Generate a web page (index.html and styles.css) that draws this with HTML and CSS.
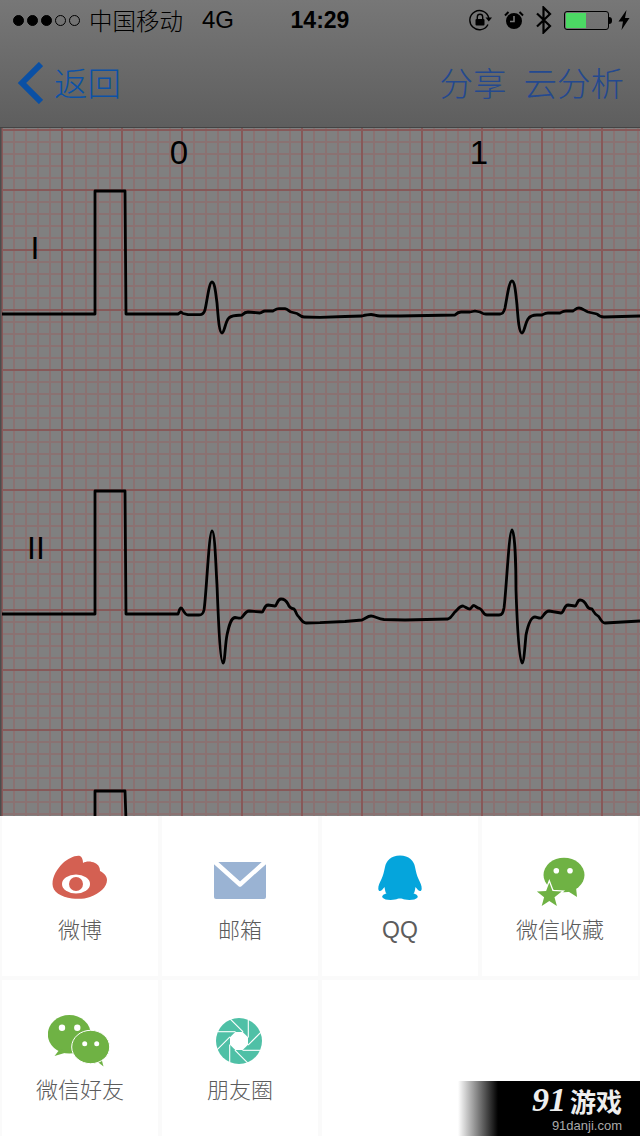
FILE: index.html
```html
<!DOCTYPE html>
<html lang="zh">
<head>
    <meta charset="UTF-8">
    <meta name="viewport" content="width=device-width, initial-scale=1.0">
    <title>心电图</title>
    <link rel="stylesheet" href="styles.css">
</head>
<body>
    <!-- Status bar and nav -->
    <header class="top">
        <div class="status">
            <div class="status-left">
                <span class="signal">
                    <i class="dot"></i><i class="dot"></i><i class="dot"></i><i class="dot off"></i><i class="dot off"></i>
                </span>
                <span class="carrier">中国移动</span>
                <span class="network">4G</span>
            </div>
            <div class="time">14:29</div>
            <div class="status-right">
                <svg class="st-lock" width="24" height="22" viewBox="0 0 24 22">
                    <path d="M19 15.5A9.6 9.6 0 1 1 19.8 9" fill="none" stroke="#000" stroke-width="1.4"/>
                    <path d="M16.500 8.500H23L19.800 12.500Z" fill="#000"/>
                    <rect x="6.500" y="10" width="9" height="6.500" rx="1" fill="#000"/>
                    <path d="M8.300 10V8a2.700 2.700 0 0 1 5.400 0v2" fill="none" stroke="#000" stroke-width="1.400"/>
                </svg>
                <svg class="st-alarm" width="20" height="20" viewBox="0 0 20 20">
                    <circle cx="10" cy="11" r="8" fill="#000"/>
                    <path d="M10 6v5.500H6" fill="none" stroke="#777" stroke-width="1.600"/>
                    <path d="M1 5.500L4.500 2M19 5.500L15.500 2" stroke="#000" stroke-width="2"/>
                </svg>
                <svg class="st-bt" width="18" height="28" viewBox="0 0 18 28">
                    <path d="M2 7.500L15 20L8.500 26.500V1.500L15 8L2 20.500" fill="none" stroke="#000" stroke-width="2.200"/>
                </svg>
                <div class="battery"><div class="battery-fill"></div></div>
                <i class="battery-nub"></i>
                <svg class="st-bolt" width="12" height="20" viewBox="0 0 12 20">
                    <path d="M8.500 0L0.500 11.500H5L3.500 20L11.500 8H7Z" fill="#000"/>
                </svg>
            </div>
        </div>
        <nav class="nav">
            <a class="back">
                <svg width="26" height="42" viewBox="0 0 26 42">
                    <polyline points="24,2 5,21 24,40" fill="none" stroke="#0a50a5" stroke-width="6"/>
                </svg>
                <span>返回</span>
            </a>
            <div class="actions">
                <span>分享</span>
                <span>云分析</span>
            </div>
        </nav>
    </header>

    <!-- ECG paper, drawn in page coordinates -->
    <svg class="chart" width="640" height="688" viewBox="0 128 640 688">
        <defs>
            <pattern id="minor" x="-4" y="124" width="12" height="12" patternUnits="userSpaceOnUse">
                <path d="M6 0V12M0 6H12" stroke="#8a7272" stroke-width="2" fill="none"/>
            </pattern>
            <pattern id="major" x="-28" y="100" width="60" height="60" patternUnits="userSpaceOnUse">
                <path d="M30 0V60M0 30H60" stroke="#875959" stroke-width="2" fill="none"/>
            </pattern>
        </defs>
        <rect x="0" y="128" width="640" height="688" fill="#808080"/>
        <rect x="0" y="128" width="640" height="688" fill="url(#minor)"/>
        <rect x="0" y="128" width="640" height="688" fill="url(#major)"/>
        <rect x="0" y="128" width="1.500" height="688" fill="#4c4c4c"/>

        <text class="tick" x="179" y="164" text-anchor="middle">0</text>
        <text class="tick" x="479" y="164" text-anchor="middle">1</text>
        <text class="lead" x="35" y="259" text-anchor="middle">I</text>
        <text class="lead" x="36" y="559" text-anchor="middle">II</text>

        <path class="trace" d="M2 314H95V191H125L126 314H178L181 312L183 313.500L188 314.700H200C203 314.700 204 313 205 310C207 302 209 282 212 282C215 282 216 296 217 303C218 314 219 333 222 333C224 333 225 324 228 319C230 316 233 315.700 236 315.500L242 315C244 313 246 312 248 312L260 313C262 312.500 263 311 265 311L273 311C275 310 276 308.700 279 308.700L285 308.700C288 309 289 311.500 291 312L297 313.500C299 315 301 317 304 317L320 317.300L345 316.500L362 316C366 315 368 314.500 371 314.500C374 314.500 376 316 380 316L400 316L455 315C457 313 458 312 461 312L470 312L475 311L480 312C482 313 483 314 486 314L500 314C503 314 504 312 505 308C507 298 509 281 512 281C515 281 516 296 517 305C518 318 519 333 522 333C524 333 525 324 528 319C530 316 533 315 537 315L542 315C544 314 545 313 548 313L560 313C562 312 563 311 566 311L573 311C575 310 576 308 579 308C582 308 585 311 588 312L597 314C599 316 601 317 604 317L640 316"/>
        <path class="trace" d="M2 614H95V491H125L126 614H178C179 612 179.500 608 181 608C183 608 184 615 188 615L199 615C202 615 203 614 204 610C206 600 209 531 212 531C215 531 216 570 217 585C218 610 220 663 223 663C225 663 225 645 227 635C229 625 231 618 235 617.500C237 617.500 239 618.500 241 618C243 617.500 245 611 249 611L262 612C264 612 264 605 268 605L275 606C277 606 277 599 281 599C284 599 286 600 288 604C289 607 291 608.500 294 609C296 611 296 614 298 616C300 617.500 302 623 306 623L320 622.700L345 621.500L362 620C366 618 368 616 371 616C375 616 378 619 384 619.500L405 620L448 619C452 618 453 613 456 611C458 609 460 606 463 606C466 607 467 609 470 609C472 608 472 605.500 474 605.500C476 606 476 608 480 608.700C483 610 483 615 487 615L499 615C502 615 503 613 504 608C506 595 509 530 512 530C515 530 516 570 516 590C517 620 519 663 522 663C524 663 525 645 526 635C528 625 531 617 535 617C537 617 539 618.500 541 618C543 617 545 611 549 611L561 613C564 613 564 605 568 605L575 606C577 606 577 600 580 600C583 600 585 602 587 606C588 608 590 609 592 609C594 612 595 615 598 616C600 617 601 623 605 623L640 621"/>
        <path class="trace" d="M95 820V791H125L126 820"/>
    </svg>

    <!-- Share sheet -->
    <section class="sheet">
        <div class="cell">
            <svg class="icon" viewBox="0 0 64 60">
                <path d="M32 7C34 8 35 11 35 14C38 12 43 12 47 14C51 16 52 19 52 22C56 24 59 27 59 31C59 38 52 44 42 48C37 50 30 50 24 49.500C13 48 4.500 43 4.500 35C4.500 27 9 20 15 14C20 10 27 6 32 7Z" fill="#d46052"/>
                <ellipse cx="28" cy="35" rx="14" ry="9.500" fill="#fff"/>
                <circle cx="28" cy="35" r="7" fill="#d46052"/>
            </svg>
            <span class="label">微博</span>
        </div>
        <div class="cell">
            <svg class="icon" viewBox="0 0 64 60">
                <rect x="6" y="13" width="52" height="37" rx="2" fill="#9ab3d3"/>
                <polyline points="3,9.500 32,35.500 61,9.500" fill="none" stroke="#fff" stroke-width="4.400" stroke-linejoin="round"/>
            </svg>
            <span class="label">邮箱</span>
        </div>
        <div class="cell">
            <svg class="icon" viewBox="0 0 64 60">
                <path d="M32 6.500C41 6.500 46 12 47 18C48 23 49 27 50.500 30C52 33 54 37 53.700 40C53.500 42 52 43 50 41L47.500 38C47 41 46.500 44 45.500 44.500C48.500 45 50.500 47 49.500 48.500C48 51 41 51.500 37 50.500C35 50 33.500 49.500 32 49.500C30.500 49.500 29 50 27 50.500C23 51.500 16 51 14.500 48.500C13.500 47 15.500 45 18.500 44.500C17.500 44 17 41 16.500 38L14 41C12 43 10.500 42 10.300 40C10 37 12 33 13.500 30C15 27 16 23 17 18C18 12 23 6.500 32 6.500Z" fill="#05a5dc"/>
            </svg>
            <span class="label latin">QQ</span>
        </div>
        <div class="cell">
            <svg class="icon" viewBox="0 0 64 60">
                <ellipse cx="36" cy="26" rx="20.500" ry="17.300" fill="#6fb244"/>
                <path d="M38 41L49 48L48 38Z" fill="#6fb244"/>
                <circle cx="28.300" cy="21.700" r="2.800" fill="#fff"/>
                <circle cx="42" cy="21.700" r="2.800" fill="#fff"/>
                <polygon points="21.300,33.500 24.500,42 33.700,42.500 26.500,48.200 28.900,57 21.300,52 13.700,57 16.100,48.200 8.900,42.500 18.100,42" fill="#6fb244" stroke="#fff" stroke-width="2.500" paint-order="stroke"/>
            </svg>
            <span class="label">微信收藏</span>
        </div>
        <div class="cell lower">
            <svg class="icon" viewBox="0 0 64 60">
                <ellipse cx="21.300" cy="25.300" rx="21.500" ry="19.300" fill="#6fb244"/>
                <path d="M12 40L6.500 47L20 43Z" fill="#6fb244"/>
                <circle cx="14" cy="18.700" r="3.200" fill="#fff"/>
                <circle cx="29.300" cy="18.700" r="3.200" fill="#fff"/>
                <path d="M46 50L55.500 57.500L53 48Z" fill="#6fb244"/>
                <ellipse cx="42.700" cy="38" rx="19" ry="16.700" fill="#6fb244" stroke="#fff" stroke-width="1"/>
                <circle cx="36.700" cy="34.700" r="2.500" fill="#fff"/>
                <circle cx="48.700" cy="34.700" r="2.500" fill="#fff"/>
            </svg>
            <span class="label">微信好友</span>
        </div>
        <div class="cell lower">
            <svg class="icon" viewBox="0 0 64 60">
                <circle cx="31" cy="32" r="23" fill="#4fc0a6"/>
                <g transform="translate(31 32)" stroke="#fff" stroke-width="1.100">
                    <polygon points="9,-3.700 9,3.700 3.700,9 -3.700,9 -9,3.700 -9,-3.700 -3.700,-9 3.700,-9" fill="#fff" stroke="none"/>
                    <line x1="9.300" y1="-24" x2="9.300" y2="-3.500"/>
                    <line x1="9.300" y1="-24" x2="9.300" y2="-3.500" transform="rotate(45)"/>
                    <line x1="9.300" y1="-24" x2="9.300" y2="-3.500" transform="rotate(90)"/>
                    <line x1="9.300" y1="-24" x2="9.300" y2="-3.500" transform="rotate(135)"/>
                    <line x1="9.300" y1="-24" x2="9.300" y2="-3.500" transform="rotate(180)"/>
                    <line x1="9.300" y1="-24" x2="9.300" y2="-3.500" transform="rotate(225)"/>
                    <line x1="9.300" y1="-24" x2="9.300" y2="-3.500" transform="rotate(270)"/>
                    <line x1="9.300" y1="-24" x2="9.300" y2="-3.500" transform="rotate(315)"/>
                </g>
            </svg>
            <span class="label">朋友圈</span>
        </div>
        <div class="cell lower wide"></div>

        <!-- Watermark over the corner -->
        <div class="watermark">
            <div class="wm-brand"><span class="wm-num">91</span><span class="wm-name">游戏</span></div>
            <div class="wm-url">91danji.com</div>
        </div>
    </section>
</body>
</html>
```
FILE: styles.css
```css
body {
    margin: 0;
    width: 640px;
    height: 1136px;
    overflow: hidden;
    background-color: #fff;
    font-family: 'Liberation Sans', 'Noto Sans CJK SC', sans-serif;
}

/* Top area */
.top {
    height: 128px;
    box-sizing: border-box;
    background: linear-gradient(#777777, #5e5e5e);
    border-bottom: 1px solid #444;
}
.status {
    height: 40px;
    display: grid;
    grid-template-columns: 1fr auto 1fr;
    align-items: center;
    color: #000;
}
.status-left {
    display: flex;
    align-items: center;
    padding-left: 13px;
}
.signal {
    display: flex;
    gap: 3px;
    margin-right: 9px;
}
.dot {
    width: 11px;
    height: 11px;
    box-sizing: border-box;
    border-radius: 50%;
    border: 1px solid #000;
    background-color: #000;
}
.dot.off {
    background-color: transparent;
}
.carrier {
    font-family: 'Noto Sans CJK SC', sans-serif;
    font-size: 23.5px;
    font-weight: 300;
    line-height: 40px;
    margin-right: 19px;
}
.network {
    font-size: 24px;
}
.time {
    font-size: 23px;
    font-weight: bold;
}
.status-right {
    display: flex;
    align-items: center;
    justify-content: flex-end;
    padding-right: 10px;
}
.st-lock {
    margin-right: 11px;
}
.st-alarm {
    margin-right: 11px;
}
.st-bt {
    margin-right: 11px;
}
.battery {
    width: 45px;
    height: 19px;
    box-sizing: border-box;
    border: 1px solid #000;
    border-radius: 3px;
    padding: 1px;
}
.battery-fill {
    width: 20px;
    height: 100%;
    background-color: #4cd964;
}
.battery-nub {
    width: 3px;
    height: 7px;
    background-color: #000;
    border-radius: 0 3px 3px 0;
    margin-right: 6px;
}
.nav {
    height: 87px;
    box-sizing: border-box;
    display: flex;
    justify-content: space-between;
    align-items: center;
    padding: 0 16px 4px 17px;
    font-family: 'Noto Sans CJK SC', sans-serif;
    font-size: 33.5px;
    font-weight: 300;
}
.back {
    display: flex;
    align-items: center;
    gap: 11px;
    color: #0c52a6;
}
.back svg {
    display: block;
    margin-top: 2px;
}
.actions {
    display: flex;
    gap: 17px;
    color: #24498f;
}

/* ECG paper */
.chart {
    display: block;
}
.trace {
    fill: none;
    stroke: #000;
    stroke-width: 2.800;
    stroke-linejoin: round;
    filter: blur(0.3px);
}
.tick {
    font-family: 'Liberation Sans', sans-serif;
    font-size: 33px;
    fill: #000;
}
.lead {
    font-family: 'Liberation Sans', sans-serif;
    font-size: 32px;
    fill: #000;
}

/* Share sheet */
.sheet {
    position: relative;
    height: 320px;
    display: grid;
    grid-template-columns: repeat(4, 160px);
    grid-template-rows: 160px 160px;
    background-color: #fff;
}
.cell {
    box-sizing: border-box;
    display: flex;
    flex-direction: column;
    align-items: center;
    padding-top: 33px;
    border-left: 2px solid #fafafa;
    border-right: 2px solid #fafafa;
}
.cell.lower {
    padding-top: 29px;
    border-top: 4px solid #fafafa;
}
.cell.wide {
    grid-column: span 2;
    border-right: none;
}
.icon {
    display: block;
    width: 64px;
    height: 60px;
    flex: none;
}
.label {
    margin-top: 4px;
    font-family: 'Noto Sans CJK SC', sans-serif;
    font-size: 22px;
    font-weight: 300;
    line-height: 30px;
    color: #5c5c5c;
}
.label.latin {
    margin-top: 6px;
    font-family: 'Liberation Sans', sans-serif;
    font-size: 23px;
}

/* Watermark */
.watermark {
    position: absolute;
    right: 0;
    bottom: 0;
    width: 182px;
    height: 55px;
    box-sizing: border-box;
    padding-right: 18px;
    display: flex;
    flex-direction: column;
    align-items: flex-end;
    background: linear-gradient(90deg, #fff 0, #000 40px);
}
.wm-brand {
    display: flex;
    align-items: center;
    height: 38px;
    color: #eee;
}
.wm-num {
    font-family: 'Liberation Serif', serif;
    font-style: italic;
    font-weight: bold;
    font-size: 34px;
    margin-right: 4px;
}
.wm-name {
    font-family: 'Noto Sans CJK SC', sans-serif;
    font-weight: bold;
    font-size: 26px;
}
.wm-url {
    font-size: 13px;
    line-height: 13px;
    color: #aaa;
}
```
